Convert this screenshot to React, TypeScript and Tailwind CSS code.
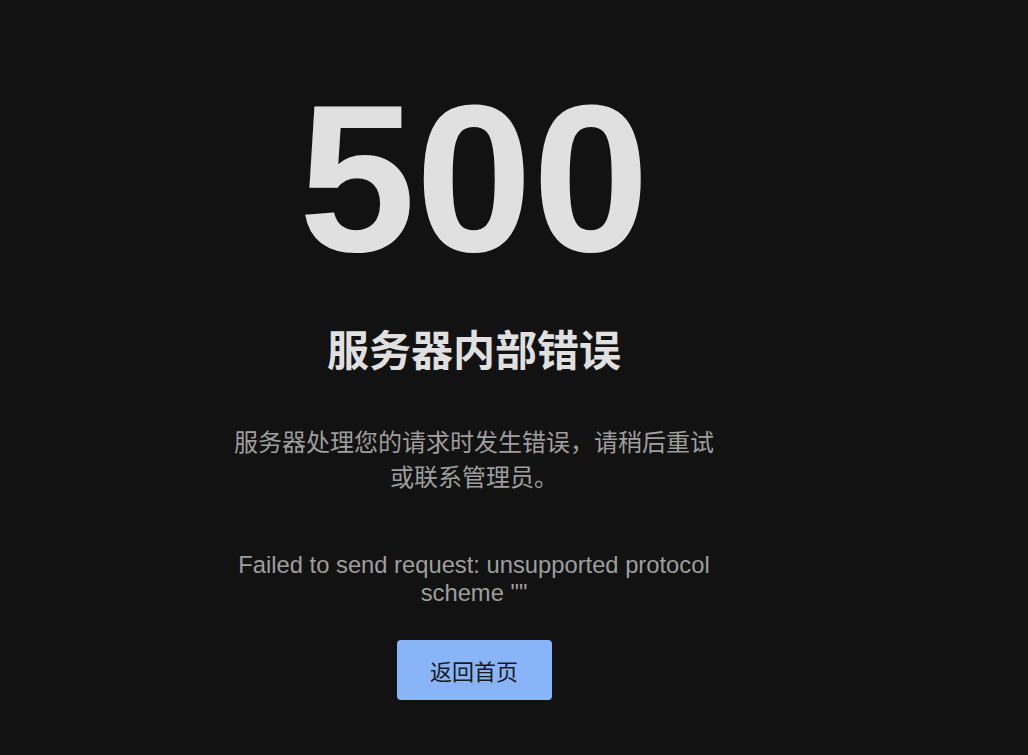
export default function App() {
  return (
    <div className="min-h-screen bg-[#121212] flex justify-center pr-[80px]">
      <div className="flex flex-col items-center w-[480px] pt-[74px] text-center">

        {/* CODE */}

        <h1 className="text-[210px] leading-none font-bold text-[#e0e0e0] font-['Liberation_Sans',Arial,sans-serif]">
          500
        </h1>

        {/* TITLE */}

        <h2 className="mt-[36px] text-[42px] leading-[56px] font-bold text-[#e0e0e0] font-['Noto_Sans_CJK_SC','Noto_Sans',sans-serif]">
          服务器内部错误
        </h2>

        <p className="mt-[47px] text-[24px] leading-[35px] text-[#9e9e9e] font-['Noto_Sans_CJK_SC','Noto_Sans',sans-serif]">
          服务器处理您的请求时发生错误，请稍后重试或联系管理员。
        </p>

        <p className="mt-[58px] text-[23.75px] leading-[28px] text-[#9e9e9e] font-['Liberation_Sans','Noto_Sans_CJK_SC',sans-serif]">
          Failed to send request: unsupported protocol scheme ""
        </p>

        <button className="mt-[33px] w-[155px] h-[60px] rounded-[4px] bg-[#8ab4f8] text-[22px] text-[#1a1a1a] font-['Noto_Sans_CJK_SC','Noto_Sans',sans-serif]">
          返回首页
        </button>

      </div>
    </div>
  )
}
